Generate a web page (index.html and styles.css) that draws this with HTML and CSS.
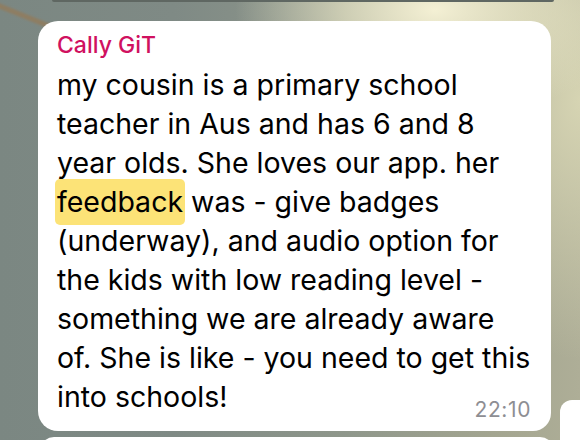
FILE: index.html
```html
<!DOCTYPE html>
<html>
<head>
<meta charset="utf-8">
<link rel="stylesheet" href="styles.css">
</head>
<body>
<div class="wall">
  <div class="streak"></div>
  <div class="prev-edge"></div>
  <div class="row">
    <div class="bubble">
      <div class="sender">Cally GiT</div>
      <div class="text">my cousin is a primary school<br>teacher in Aus and has 6 and 8<br>year olds. She loves our app. her<br><span class="hl">feedback</span> was - give badges<br>(underway), and audio option for<br>the kids with low reading level -<br>something we are already aware<br>of. She is like - you need to get this<br>into schools!</div>
      <span class="time">22:10</span>
    </div>
    <div class="side"></div>
  </div>
  <div class="next"></div>
</div>
</body>
</html>
```
FILE: styles.css
```css
html, body {
  margin: 0;
  padding: 0;
}
body {
  width: 580px;
  height: 440px;
  overflow: hidden;
  font-family: Inter, "Noto Sans", sans-serif;
}
.wall {
  position: relative;
  width: 580px;
  height: 440px;
  overflow: hidden;
  background:
    radial-gradient(ellipse 200px 110px at 435px 10px, rgba(244,240,212,1), rgba(232,229,198,0.7) 45%, rgba(200,200,170,0) 100%),
    radial-gradient(ellipse 140px 260px at 580px 100px, rgba(216,214,180,0.95), rgba(216,214,180,0) 100%),
    linear-gradient(to right, #7b8782 0%, #7f8a85 30%, #8f978b 60%, #a3a590 85%, #aeae97 100%);
}
.streak {
  position: absolute;
  left: -8px;
  top: 13px;
  width: 62px;
  height: 5px;
  background: #8e7d62;
  transform: rotate(22deg);
  filter: blur(1px);
  border-radius: 3px;
}
.prev-edge {
  height: 2px;
  margin: 0 26px 0 52px;
  background: #5f6762;
  border-radius: 0 0 4px 4px;
}
.row {
  display: flex;
  align-items: flex-end;
  gap: 9px;
  margin-top: 19px;
  margin-left: 38px;
}
.bubble {
  position: relative;
  flex-shrink: 0;
  width: 513px;
  box-sizing: border-box;
  height: 410px;
  background: #fff;
  border-radius: 20px 20px 18px 20px;
  padding: 10px 12px 0 19px;
}
.sender {
  font-size: 23px;
  line-height: 28px;
  font-weight: 500;
  color: #d0115f;
}
.text {
  margin-top: 6px;
  font-size: 28.5px;
  line-height: 39px;
  color: #000;
  white-space: nowrap;
}
.hl {
  background: #fce377;
  padding: 5px 2px 6px;
  margin: 0 -2px;
  border-radius: 5px;
}
.time {
  position: absolute;
  right: 20px;
  bottom: 10px;
  font-size: 21px;
  line-height: 23px;
  letter-spacing: 0.6px;
  color: #8e8e93;
}
.side {
  width: 40px;
  height: 40px;
  margin-bottom: -9px;
  background: #fff;
  border-radius: 12px 0 0 0;
  flex-shrink: 0;
}
.next {
  margin: 6px 26px 0 40px;
  height: 20px;
  background: #fff;
  border-radius: 14px 14px 0 0;
}
```
